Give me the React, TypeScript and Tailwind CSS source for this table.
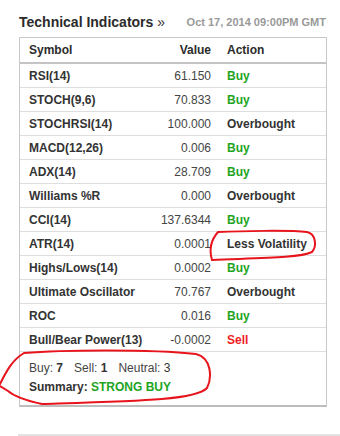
import React from "react";

type Row = { s: string; v: string; a: string; c: "buy" | "sell" | "neutral" };

const rows: Row[] = [
  { s: "RSI(14)", v: "61.150", a: "Buy", c: "buy" },
  { s: "STOCH(9,6)", v: "70.833", a: "Buy", c: "buy" },
  { s: "STOCHRSI(14)", v: "100.000", a: "Overbought", c: "neutral" },
  { s: "MACD(12,26)", v: "0.006", a: "Buy", c: "buy" },
  { s: "ADX(14)", v: "28.709", a: "Buy", c: "buy" },
  { s: "Williams %R", v: "0.000", a: "Overbought", c: "neutral" },
  { s: "CCI(14)", v: "137.6344", a: "Buy", c: "buy" },
  { s: "ATR(14)", v: "0.0001", a: "Less Volatility", c: "neutral" },
  { s: "Highs/Lows(14)", v: "0.0002", a: "Buy", c: "buy" },
  { s: "Ultimate Oscillator", v: "70.767", a: "Overbought", c: "neutral" },
  { s: "ROC", v: "0.016", a: "Buy", c: "buy" },
  { s: "Bull/Bear Power(13)", v: "-0.0002", a: "Sell", c: "sell" },
];

const colorOf = (c: Row["c"]) =>
  c === "buy" ? "text-[#1ea51e]" : c === "sell" ? "text-[#ee1c25]" : "text-[#333333]";

export default function App() {
  return (
    <div
      className="relative w-[340px] h-[436px] bg-white overflow-hidden text-[#333333]"
      style={{ fontFamily: '"Liberation Sans", Arial, sans-serif' }}
    >
      <div className="pl-[19px] pt-[12px] w-[327px]">
        <div className="flex items-center justify-between h-[20px]">
          <div className="flex items-center">
            <span className="text-[14px] font-bold text-[#2b2b2b] leading-[20px]">Technical Indicators</span>
            <span className="text-[14px] ml-[4px] text-[#333333] leading-[20px]">»</span>
          </div>
          <span className="text-[11px] font-bold text-[#999999] leading-[20px] pr-[1px]">
            Oct 17, 2014 09:00PM GMT
          </span>
        </div>
        <div className="mt-[5px] border border-[#c8c8c8] border-b-2 border-b-[#bdbdbd] w-[308px]">
          <div className="flex items-center h-[26px] border-b-2 border-[#c4c4c4] text-[12px] font-bold text-[#2b2b2b]">
            <div className="flex-1 pl-[9px]">Symbol</div>
            <div className="w-[55px] text-right">Value</div>
            <div className="w-[115px] pl-[16px]">Action</div>
          </div>
          {rows.map((r) => (
            <div key={r.s} className="flex items-center h-[24px] border-b border-[#dedede] text-[12px]">
              <div className="flex-1 pl-[9px] font-bold text-[#333333]">{r.s}</div>
              <div className="w-[55px] text-right text-[#444444]">{r.v}</div>
              <div className={`w-[115px] pl-[16px] font-bold ${colorOf(r.c)}`}>{r.a}</div>
            </div>
          ))}
          <div className="h-[53px] pl-[9px] pt-[7px] text-[12px]">
            <div className="leading-[19px] text-[#444444]">
              Buy: <b className="text-[#333333]">7</b>
              <span className="ml-[11px]">Sell: </span>
              <b className="text-[#333333]">1</b>
              <span className="ml-[11px]">Neutral: </span>
              <b className="text-[#333333] font-normal">3</b>
            </div>
            <div className="leading-[19px] font-bold">
              <span className="text-[#333333]">Summary: </span>
              <span className="text-[#1ea51e]">STRONG BUY</span>
            </div>
          </div>
        </div>
      </div>
      <div className="absolute left-[18px] right-0 bottom-0 h-[2px] bg-[#e3e3e3]" />
      <svg className="absolute left-0 top-0 pointer-events-none" width="340" height="436" viewBox="0 0 340 436">
        <path
          d="M 218 232 C 240 231, 290 230, 307 232 C 316 234, 317 246, 312 252 C 300 258, 260 258, 212 260 C 209 250, 211 240, 218 232"
          fill="none"
          stroke="#e8141c"
          strokeWidth="2"
          strokeLinecap="round"
        />
        <path
          d="M 0 384 C 6 372, 12 360, 24 353 C 60 350, 150 349, 196 354 C 212 358, 212 378, 207 388 C 196 400, 140 401, 42 404 C 28 401, 14 396, 8 391 L 0 386"
          fill="none"
          stroke="#e8141c"
          strokeWidth="2"
          strokeLinecap="round"
        />
      </svg>
    </div>
  );
}
